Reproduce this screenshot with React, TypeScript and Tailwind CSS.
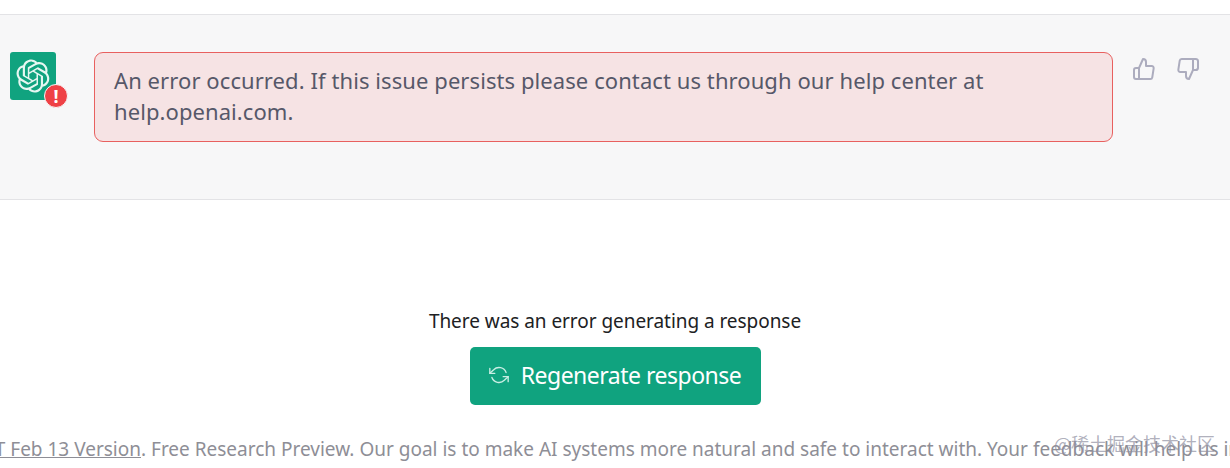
const logo = "M37.5324 16.8707C37.9808 15.5241 38.1363 14.0974 37.9886 12.6859C37.8409 11.2744 37.3934 9.91076 36.676 8.68622C35.6126 6.83404 33.9882 5.3676 32.0373 4.4985C30.0864 3.62941 27.9098 3.40259 25.8215 3.85078C24.8796 2.7893 23.7219 1.94125 22.4257 1.36341C21.1295 0.785575 19.7249 0.491269 18.3058 0.500197C16.1708 0.495044 14.0893 1.16803 12.3614 2.42214C10.6335 3.67624 9.34853 5.44666 8.6917 7.47815C7.30085 7.76286 5.98686 8.3414 4.8377 9.17505C3.68854 10.0087 2.73073 11.0782 2.02839 12.312C0.956464 14.1591 0.498905 16.2988 0.721698 18.4228C0.944492 20.5467 1.83612 22.5449 3.268 24.1293C2.81966 25.4759 2.66413 26.9026 2.81182 28.3141C2.95951 29.7256 3.40701 31.0892 4.12437 32.3138C5.18791 34.1659 6.8123 35.6322 8.76321 36.5013C10.7141 37.3704 12.8907 37.5973 14.9789 37.1492C15.9208 38.2107 17.0786 39.0587 18.3747 39.6366C19.6709 40.2144 21.0755 40.5087 22.4946 40.4998C24.6307 40.5054 26.7133 39.8321 28.4418 38.5772C30.1704 37.3223 31.4556 35.5506 32.1119 33.5179C33.5027 33.2332 34.8167 32.6547 35.9659 31.821C37.115 30.9874 38.0728 29.9178 38.7752 28.684C39.8458 26.8371 40.3023 24.6979 40.0789 22.5748C39.8556 20.4517 38.9639 18.4544 37.5324 16.8707ZM22.4978 37.8849C20.7443 37.8874 19.0459 37.2733 17.6994 36.1501C17.7601 36.117 17.8666 36.0586 17.936 36.0161L25.9004 31.4156C26.1003 31.3019 26.2663 31.137 26.3813 30.9378C26.4964 30.7386 26.5563 30.5124 26.5549 30.2825V19.0542L29.9213 20.998C29.9389 21.0068 29.9541 21.0198 29.9656 21.0359C29.977 21.052 29.9842 21.0707 29.9867 21.0902V30.3889C29.9842 32.375 29.1946 34.2791 27.7909 35.6841C26.3872 37.0892 24.4838 37.8806 22.4978 37.8849ZM6.39227 31.0064C5.51397 29.4888 5.19742 27.7107 5.49804 25.9832C5.55718 26.0187 5.66048 26.0818 5.73461 26.1244L13.699 30.7248C13.8975 30.8408 14.1233 30.902 14.3532 30.902C14.583 30.902 14.8088 30.8408 15.0073 30.7248L24.731 25.1103V28.9979C24.7321 29.0177 24.7283 29.0376 24.7199 29.0556C24.7115 29.0736 24.6988 29.0893 24.6829 29.1012L16.6317 33.7497C14.9096 34.7416 12.8643 35.0097 10.9447 34.4954C9.02506 33.9811 7.38785 32.7263 6.39227 31.0064ZM4.29707 13.6194C5.17156 12.0998 6.55279 10.9364 8.19885 10.3327C8.19885 10.4013 8.19491 10.5228 8.19491 10.6071V19.808C8.19351 20.0378 8.25334 20.2638 8.36823 20.4629C8.48312 20.6619 8.64893 20.8267 8.84863 20.9404L18.5723 26.5542L15.206 28.4979C15.1894 28.5089 15.1703 28.5155 15.1505 28.5173C15.1307 28.5191 15.1107 28.516 15.0924 28.5082L7.04046 23.8557C5.32135 22.8601 4.06716 21.2235 3.55289 19.3046C3.03862 17.3858 3.30624 15.3413 4.29707 13.6194ZM31.955 20.0556L22.2312 14.4411L25.5976 12.4981C25.6142 12.4872 25.6333 12.4805 25.6531 12.4787C25.6729 12.4769 25.6928 12.4801 25.7111 12.4879L33.7631 17.1364C34.9967 17.849 36.0017 18.8982 36.6606 20.1613C37.3194 21.4244 37.6047 22.849 37.4832 24.2684C37.3617 25.6878 36.8382 27.0432 35.9743 28.1759C35.1103 29.3086 33.9415 30.1717 32.6047 30.6641C32.6047 30.5947 32.6047 30.4733 32.6047 30.3889V21.188C32.6066 20.9586 32.5474 20.7328 32.4332 20.5338C32.319 20.3348 32.154 20.1698 31.955 20.0556ZM35.3055 15.0128C35.2464 14.9765 35.1431 14.9142 35.069 14.8717L27.1045 10.2712C26.906 10.1554 26.6803 10.0943 26.4504 10.0943C26.2206 10.0943 25.9948 10.1554 25.7963 10.2712L16.0726 15.8858V11.9982C16.0715 11.9783 16.0753 11.9585 16.0837 11.9405C16.0921 11.9225 16.1048 11.9068 16.1207 11.8949L24.1719 7.25025C25.4053 6.53903 26.8158 6.19376 28.2383 6.25482C29.6608 6.31589 31.0364 6.78077 32.2044 7.59508C33.3723 8.40939 34.2842 9.53945 34.8334 10.8531C35.3826 12.1667 35.5464 13.6095 35.3055 15.0128ZM14.2424 21.9419L10.8752 19.9981C10.8576 19.9893 10.8423 19.9763 10.8309 19.9602C10.8195 19.9441 10.8122 19.9254 10.8098 19.9058V10.6071C10.8107 9.18295 11.2173 7.78848 11.9819 6.58696C12.7466 5.38544 13.8377 4.42659 15.1275 3.82264C16.4173 3.21869 17.8524 2.99464 19.2649 3.1767C20.6775 3.35876 22.0089 3.93941 23.1034 4.85067C23.0427 4.88379 22.937 4.94215 22.8668 4.98473L14.9024 9.58517C14.7025 9.69878 14.5366 9.86356 14.4215 10.0626C14.3065 10.2616 14.2466 10.4877 14.2479 10.7175L14.2424 21.9419ZM16.071 17.9991L20.4018 15.4978L24.7325 17.9975V22.9985L20.4018 25.4983L16.071 22.9985V17.9991Z";

export default function App() {
  return (
    <div className="relative h-[468px] w-[1230px] overflow-hidden bg-white font-['Noto_Sans','Open_Sans',sans-serif]">
      <div className="h-[14px]" />
      <div className="flex h-[186px] border-y border-[#e3e3e6] bg-[#f7f7f8] pt-[37px]">
        <div className="relative ml-[10px] h-[48px] w-[46px] shrink-0">
          <div className="flex h-[48px] w-[46px] items-center justify-center rounded-[3px] bg-[#10a37f]">
            <svg viewBox="0 0 41 41" className="h-[34px] w-[34px]" fill="#e6f7f2">
              <path d={logo} />
            </svg>
          </div>
          <div className="absolute left-[34px] top-[32px] flex h-[24px] w-[24px] items-center justify-center rounded-full border border-[#f7f7f8] bg-[#ef4146] text-[18px] font-bold leading-none text-white">
            !
          </div>
        </div>
        <div className="ml-[38px] h-[90px] w-[1019px] shrink-0 rounded-[9px] border border-[#e8605f] bg-[#f6e3e4] px-[19px] py-[12px] text-[22px] leading-[31px] tracking-[0.08px] text-[#565869]">
          An error occurred. If this issue persists please contact us through our help center at help.openai.com.
        </div>
        <div className="ml-[19px] flex gap-[20px] pt-[5px] text-[#acacbe]">
          <svg viewBox="0 0 24 24" className="h-[24px] w-[24px]" fill="none" stroke="currentColor" strokeWidth="2" strokeLinecap="round" strokeLinejoin="round">
            <path d="M14 9V5a3 3 0 0 0-3-3l-4 9v11h11.28a2 2 0 0 0 2-1.7l1.38-9a2 2 0 0 0-2-2.3zM7 22H4a2 2 0 0 1-2-2v-7a2 2 0 0 1 2-2h3" />
          </svg>
          <svg viewBox="0 0 24 24" className="h-[24px] w-[24px]" fill="none" stroke="currentColor" strokeWidth="2" strokeLinecap="round" strokeLinejoin="round">
            <path d="M10 15v4a3 3 0 0 0 3 3l4-9V2H5.72a2 2 0 0 0-2 1.7l-1.38 9a2 2 0 0 0 2 2.3zm7-13h2.67A2.31 2.31 0 0 1 22 4v7a2.31 2.31 0 0 1-2.33 2H17" />
          </svg>
        </div>
      </div>
      <div className="flex flex-col items-center pt-[107px]">
        <p className="text-[19px] leading-[28px] tracking-[-0.05px] text-[#202123]">There was an error generating a response</p>
        <button className="mt-[12px] flex h-[58px] w-[291px] items-center justify-center gap-[12px] rounded-[5px] bg-[#10a37f] pb-[2px] text-[23px] tracking-[-0.5px] text-white">
          <svg viewBox="0 0 24 24" className="h-[20px] w-[20px] text-[#c9eee4]" fill="none" stroke="currentColor" strokeWidth="1.6" strokeLinecap="round" strokeLinejoin="round">
            <polyline points="1 4 1 10 7 10" />
            <polyline points="23 20 23 14 17 14" />
            <path d="M20.49 9A9 9 0 0 0 5.64 5.64L1 10m22 4l-4.64 4.36A9 9 0 0 1 3.51 15" />
          </svg>
          Regenerate response
        </button>
      </div>
      <div className="mt-[30px] flex justify-center whitespace-nowrap text-[19px] leading-[28px] text-[#8e8e96]">
        <span>
          <span className="underline">ChatGPT Feb 13 Version</span>. Free Research Preview. Our goal is to make AI systems more natural and safe to interact with. Your feedback will help us improve.
        </span>
      </div>
      <div className="absolute left-[1054px] top-[431px] font-['Noto_Sans_CJK_SC',sans-serif] text-[18px] leading-[24px] text-[#8e8ea0]/70">
        @稀土掘金技术社区
      </div>
    </div>
  );
}
